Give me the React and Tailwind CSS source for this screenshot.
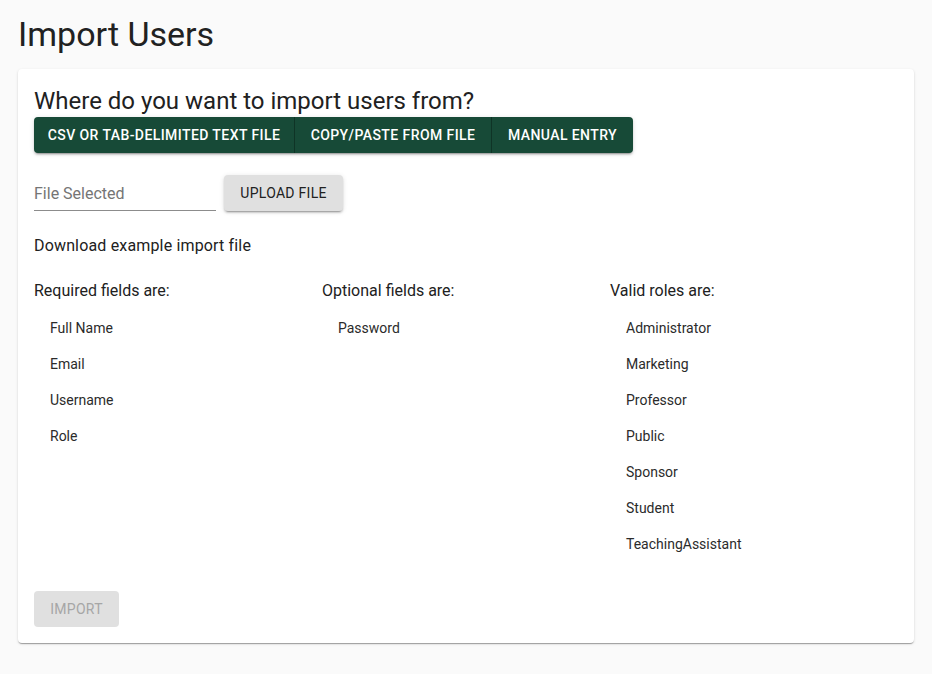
import React from "react";

const required = ["Full Name", "Email", "Username", "Role"];
const optional = ["Password"];
const roles = ["Administrator", "Marketing", "Professor", "Public", "Sponsor", "Student", "TeachingAssistant"];

function Column({ title, items }) {
  return (
    <div className="flex flex-col">
      <div className="text-[16px] leading-[24px] text-[#212121] mb-[7px]">{title}</div>
      <div className="flex flex-col">
        {items.map((it) => (
          <div key={it} className="pl-4 text-[14px] leading-[36px] h-[36px] text-[#2b2b2b]">
            {it}
          </div>
        ))}
      </div>
    </div>
  );
}

export default function App() {
  return (
    <div
      className="min-h-[674px] w-full bg-[#fafafa] px-[18px] pt-[14px] pb-[31px]"
      style={{ fontFamily: "Roboto, 'Noto Sans', sans-serif" }}
    >
      <h1 className="text-[34px] leading-[40px] text-[#212121] font-normal">Import Users</h1>
      <div className="mt-[15px] bg-white rounded-[4px] shadow-[0_2px_1px_-1px_rgba(0,0,0,0.2),0_1px_1px_0_rgba(0,0,0,0.14),0_1px_3px_0_rgba(0,0,0,0.12)] p-4">
        <h2 className="text-[24px] leading-[32px] text-[#212121] font-normal">
          Where do you want to import users from?
        </h2>
        <div className="flex">
          <div className="flex h-[36px] rounded-[4px] bg-[#174a37] overflow-hidden shadow-[0_3px_1px_-2px_rgba(0,0,0,0.2),0_2px_2px_0_rgba(0,0,0,0.14),0_1px_5px_0_rgba(0,0,0,0.12)]">
            <button className="w-[261px] text-[14px] font-medium uppercase tracking-[0.03em] text-white border-r border-[#0f3426]">
              CSV or tab-delimited text file
            </button>
            <button className="w-[197px] text-[14px] font-medium uppercase tracking-[0.03em] text-white border-r border-[#0f3426]">
              Copy/Paste from file
            </button>
            <button className="w-[141px] text-[14px] font-medium uppercase tracking-[0.03em] text-white">
              Manual entry
            </button>
          </div>
        </div>
        <div className="mt-[22px] flex items-end">
          <div className="w-[182px] h-[36px] pt-[3px] flex items-center border-b border-[#8c8c8c] text-[16px] text-[#757575]">
            File Selected
          </div>
          <button className="ml-[8px] w-[119px] h-[36px] rounded-[4px] bg-[#e0e0e0] text-[14px] font-normal uppercase tracking-[0.02em] text-[#212121] shadow-[0_3px_1px_-2px_rgba(0,0,0,0.2),0_2px_2px_0_rgba(0,0,0,0.14),0_1px_5px_0_rgba(0,0,0,0.12)]">
            Upload File
          </button>
        </div>
        <div className="mt-[23px] text-[16px] leading-[24px] text-[#212121] tracking-[0.01em]">Download example import file</div>
        <div className="mt-[21px] grid grid-cols-3">
          <Column title="Required fields are:" items={required} />
          <Column title="Optional fields are:" items={optional} />
          <Column title="Valid roles are:" items={roles} />
        </div>
        <div className="mt-[29px]">
          <button className="w-[85px] h-[36px] rounded-[4px] bg-[#e0e0e0] text-[14px] font-normal uppercase tracking-[0.02em] text-[#a6a6a6]">
            Import
          </button>
        </div>
      </div>
    </div>
  );
}
